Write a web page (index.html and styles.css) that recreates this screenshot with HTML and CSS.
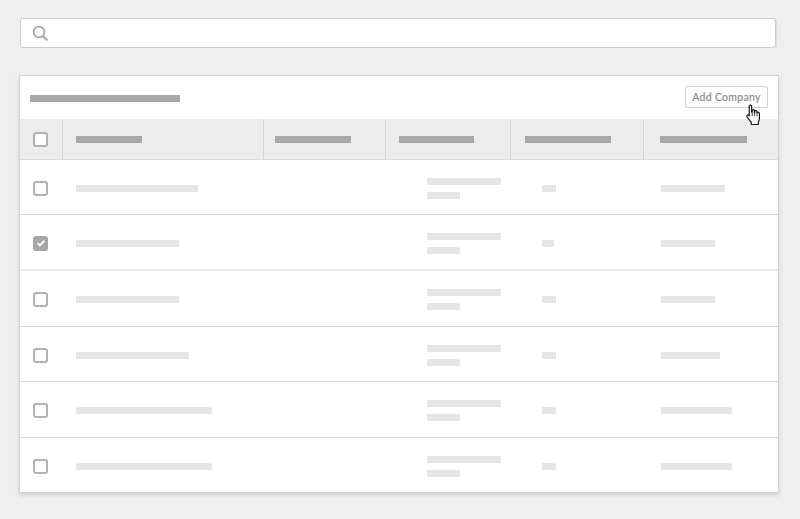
FILE: index.html
```html
<!DOCTYPE html>
<html lang="en">
<head>
<meta charset="utf-8">
<title>Companies</title>
<link rel="stylesheet" href="styles.css">
</head>
<body>
<div class="search">
  <svg class="search-icon" width="17" height="17" viewBox="0 0 17 17" fill="none"><circle cx="7" cy="7" r="5.4" stroke="#a8a8a8" stroke-width="1.8"/><path d="M11 11l4.2 4.4" stroke="#a8a8a8" stroke-width="2.2"/></svg>
</div>
<main class="card">
  <div class="toolbar">
    <span class="bar dark w150"></span>
    <button class="add">Add Company</button>
    <svg class="cursor" width="17" height="22" viewBox="0 0 17 22">
      <path d="M4.2 2.2c0-1.5 2.4-1.5 2.4 0v6l.6-.1V6.6c0-1.2 2-1.2 2.1 0v1.7l.5.1v-1c.1-1.2 2-1.1 2.1.1v1.3l.5.1c.2-1 1.9-.9 2 .3v5.3c0 1.6-.6 2.6-1.1 3.6v2.4H6.3v-2c-1.2-1.4-2.6-3.4-4.2-5.6-.9-1.4.7-2.6 1.7-1.5l.4.5z" fill="#fff" stroke="#1c1c1c" stroke-width="1.2" stroke-linejoin="round"/>
      <path d="M7.2 8.5v3.5M9.6 8.5v3.5M12.1 8.8v3.2" stroke="#1c1c1c" stroke-width=".8"/>
    </svg>
  </div>
  <div class="row head">
    <div class="cell box-cell"><span class="check on-head"></span></div>
    <div class="cell"><span class="bar dark w66"></span></div>
    <div class="cell"><span class="bar dark w76"></span></div>
    <div class="cell"><span class="bar dark w75"></span></div>
    <div class="cell"><span class="bar dark w86"></span></div>
    <div class="cell"><span class="bar dark w87"></span></div>
  </div>
  <div class="body">
    <div class="row">
      <div class="cell box-cell"><span class="check"></span></div>
      <div class="cell"><span class="bar w122"></span></div>
      <div class="cell"></div>
      <div class="cell stack"><span class="bar w74"></span><span class="bar w33"></span></div>
      <div class="cell"><span class="bar w14"></span></div>
      <div class="cell"><span class="bar w64"></span></div>
    </div>
    <div class="row soft">
      <div class="cell box-cell"><span class="check checked"><svg width="10" height="8" viewBox="0 0 10 8" fill="none"><path d="M1.6 4.2l2.3 2.2 4.5-4.8" stroke="#fff" stroke-width="1.8"/></svg></span></div>
      <div class="cell"><span class="bar w103"></span></div>
      <div class="cell"></div>
      <div class="cell stack"><span class="bar w74"></span><span class="bar w33"></span></div>
      <div class="cell"><span class="bar w12"></span></div>
      <div class="cell"><span class="bar w54"></span></div>
    </div>
    <div class="row">
      <div class="cell box-cell"><span class="check"></span></div>
      <div class="cell"><span class="bar w103"></span></div>
      <div class="cell"></div>
      <div class="cell stack"><span class="bar w74"></span><span class="bar w33"></span></div>
      <div class="cell"><span class="bar w14"></span></div>
      <div class="cell"><span class="bar w54"></span></div>
    </div>
    <div class="row">
      <div class="cell box-cell"><span class="check"></span></div>
      <div class="cell"><span class="bar w113"></span></div>
      <div class="cell"></div>
      <div class="cell stack"><span class="bar w74"></span><span class="bar w33"></span></div>
      <div class="cell"><span class="bar w14"></span></div>
      <div class="cell"><span class="bar w59"></span></div>
    </div>
    <div class="row">
      <div class="cell box-cell"><span class="check"></span></div>
      <div class="cell"><span class="bar w136"></span></div>
      <div class="cell"></div>
      <div class="cell stack"><span class="bar w74"></span><span class="bar w33"></span></div>
      <div class="cell"><span class="bar w14"></span></div>
      <div class="cell"><span class="bar w71"></span></div>
    </div>
    <div class="row">
      <div class="cell box-cell"><span class="check"></span></div>
      <div class="cell"><span class="bar w136"></span></div>
      <div class="cell"></div>
      <div class="cell stack"><span class="bar w74"></span><span class="bar w33"></span></div>
      <div class="cell"><span class="bar w14"></span></div>
      <div class="cell"><span class="bar w71"></span></div>
    </div>
  </div>
</main>
</body>
</html>
```

FILE: styles.css
```css
* { box-sizing: border-box; }
html, body { margin: 0; height: 100%; }
body {
  background: #efefef;
  font-family: Lato, "Liberation Sans", sans-serif;
  padding: 18px 21px 0 19px;
  overflow: hidden;
}
.search {
  margin-left: 1px;
  margin-right: 3px;
  height: 30px;
  background: #fff;
  border: 1px solid #cdcdcd;
  border-radius: 3px;
  box-shadow: 1px 0 0 #dedede;
  display: flex;
  align-items: center;
  padding-left: 11px;
}
.card {
  margin-top: 27px;
  height: 418px;
  background: #fff;
  border: 1px solid #d3d3d3;
  box-shadow: 0 2px 4px rgba(0, 0, 0, .14);
  display: flex;
  flex-direction: column;
}
.toolbar {
  position: relative;
  flex: 0 0 43px;
  display: flex;
  align-items: center;
  justify-content: space-between;
  padding: 0 10px;
}
.toolbar > .bar { margin-top: 1px; }
.add {
  height: 22px;
  width: 83px;
  padding: 0;
  margin-top: -1px;
  background: #fff;
  border: 1px solid #d2d2d2;
  border-radius: 2px;
  color: #8c8c8c;
  font: 400 10.5px Lato, "Liberation Sans", sans-serif;
  letter-spacing: .3px;
  -webkit-text-stroke: .2px #8c8c8c;
}
.cursor { position: absolute; right: 16px; top: 28px; }
.row {
  display: grid;
  grid-template-columns: 43px 201px 122px 125px 133px 1fr;
  align-items: center;
  padding-top: 2px;
  border-bottom: 1px solid #d6d6d6;
}
.row:last-child { border-bottom: 0; }
.row.soft { border-bottom-color: #ebebeb; border-bottom-width: 2px; }
.head {
  flex: 0 0 41px;
  padding-top: 0;
  background: #ececec;
  align-items: stretch;
  border-bottom: 1px solid #dcdcdc;
}
.body {
  flex: 1;
  display: grid;
  grid-template-rows: 55px 56px 56px 55px 56px 1fr;
}
.cell { padding-left: 13px; display: flex; align-items: center; min-width: 0; }
.head .cell { border-right: 1px solid #d4d4d4; }
.head .cell:nth-child(3) { padding-left: 11px; }
.head .cell:last-child { border-right: 0; padding-left: 16px; }
.head .cell:nth-child(5) { padding-left: 14px; }
.row:not(.head) .cell:nth-child(4) { padding-left: 41px; }
.row:not(.head) .cell:nth-child(5) { padding-left: 31px; }
.row:not(.head) .cell:nth-child(6) { padding-left: 17px; }
.stack { flex-direction: column; align-items: flex-start; gap: 7px; }
.bar { display: block; height: 7px; background: #e5e5e5; }
.bar.dark { background: #a8a8a8; }
.check {
  width: 15px;
  height: 15px;
  background: #fff;
  border: 2px solid #b2b2b2;
  border-radius: 3px;
  display: flex;
  align-items: center;
  justify-content: center;
}
.check.checked { background: #a6a6a6; border-color: #a6a6a6; }
.w12 { width: 12px; } .w14 { width: 14px; } .w33 { width: 33px; }
.w54 { width: 54px; } .w59 { width: 59px; } .w64 { width: 64px; }
.w66 { width: 66px; } .w71 { width: 71px; } .w74 { width: 74px; }
.w75 { width: 75px; } .w76 { width: 76px; } .w86 { width: 86px; }
.w87 { width: 87px; } .w103 { width: 103px; } .w113 { width: 113px; }
.w122 { width: 122px; } .w136 { width: 136px; } .w150 { width: 150px; }
```
